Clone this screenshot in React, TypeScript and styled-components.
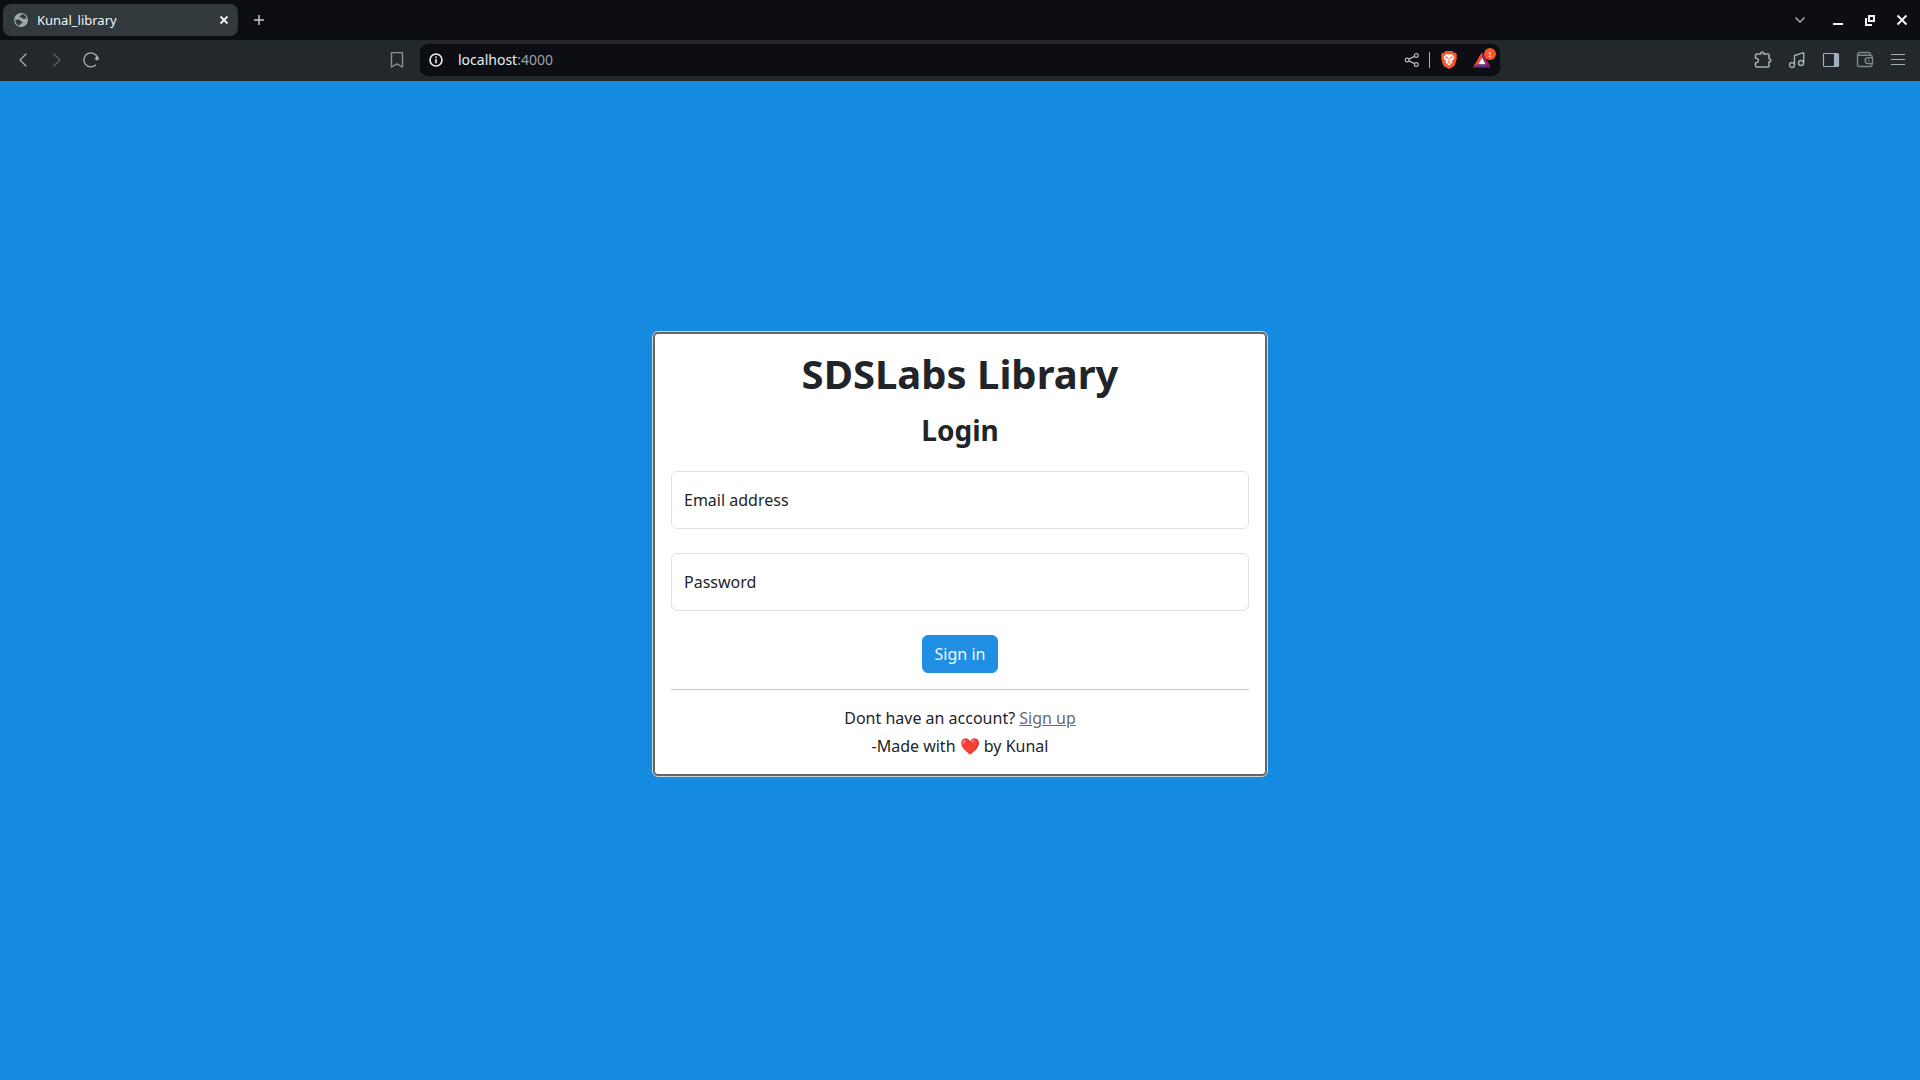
import React from "react";
import styled, { createGlobalStyle } from "styled-components";

const Global = createGlobalStyle`
  *, *::before, *::after { box-sizing: border-box; }
  body {
    margin: 0;
    font-family: "Noto Sans", "Liberation Sans", sans-serif;
    font-size: 16px;
    line-height: 24px;
    color: #212529;
    background: #148ae1;
  }
`;

const Page = styled.div`
  min-height: 100vh;
  display: flex;
  flex-direction: column;
`;

const TabStrip = styled.header`
  height: 40px;
  padding-left: 3px;
  display: flex;
  align-items: center;
  background: #0d0e13;
`;

const Tab = styled.div`
  width: 235px;
  height: 32px;
  padding: 0 8px 0 11px;
  display: flex;
  align-items: center;
  gap: 9px;
  border-radius: 8px;
  background: #31393d;
  color: #f2f4f5;
  font-size: 13px;
`;

const TabTitle = styled.span`
  flex: 1;
`;

const Spacer = styled.div`
  flex: 1;
`;

const IconButton = styled.button<{ $w?: number; $color?: string }>`
  width: ${(p) => p.$w ?? 34}px;
  height: 24px;
  padding: 0;
  border: 0;
  display: flex;
  align-items: center;
  justify-content: center;
  flex: none;
  background: none;
  color: ${(p) => p.$color ?? "#9fb0b8"};
`;

const Toolbar = styled.nav`
  height: 41px;
  padding: 0 6px 1px;
  display: grid;
  grid-template-columns: 1fr minmax(0, 1080px) 1fr;
  align-items: center;
  background: #22282b;
`;

const ToolGroup = styled.div<{ $end?: boolean }>`
  display: flex;
  padding-right: ${(p) => (p.$end ? 0 : 11)}px;
  justify-content: ${(p) => (p.$end ? "flex-end" : "flex-start")};
`;

const AddressBar = styled.div`
  height: 32px;
  padding-left: 4px;
  display: flex;
  align-items: center;
  border-radius: 8px;
  background: #0d0e13;
`;

const Address = styled.a`
  margin-left: 10px;
  color: #e6edf3;
  font-size: 14px;
  text-decoration: none;
`;

const Port = styled.span`
  color: #9ba4ab;
`;

const Divider = styled.span`
  width: 1px;
  height: 16px;
  background: #a9adb0;
`;

const Main = styled.main`
  flex: 1;
  display: flex;
  align-items: center;
  justify-content: center;
  padding: 0 16px 53px;
`;

const Card = styled.form`
  width: 100%;
  max-width: 614px;
  padding: 16px 16px 14px;
  border: 2px solid #666666;
  border-radius: 5px;
  outline: 1px solid #cfd4d8;
  display: flex;
  flex-direction: column;
  align-items: center;
  background: #ffffff;
`;

const Title = styled.h1`
  margin: 0 0 16px;
  font-size: 40px;
  line-height: 48px;
  font-weight: 700;
`;

const Subtitle = styled.h2`
  margin: 0 0 24px;
  font-size: 28px;
  line-height: 33px;
  font-weight: 700;
`;

const Field = styled.div`
  width: 100%;
  height: 58px;
  margin-bottom: 24px;
  display: grid;
  align-items: center;
`;

const FieldLabel = styled.label`
  grid-area: 1 / 1;
  padding-left: 13px;
  pointer-events: none;
`;

const FieldInput = styled.input`
  grid-area: 1 / 1;
  width: 100%;
  height: 100%;
  padding: 16px 12px;
  border: 1px solid #dee2e6;
  border-radius: 6px;
  background: #ffffff;
  font: inherit;
`;

const SubmitButton = styled.button`
  height: 38px;
  padding: 0 12px;
  border: 1px solid #208fe3;
  border-radius: 6px;
  background: #208fe3;
  color: #f1f8fd;
  font: inherit;
`;

const Rule = styled.hr`
  width: 100%;
  margin: 16px 0 14px;
  border: 0;
  border-top: 1px solid #c7c8c9;
`;

const Line = styled.p`
  margin: 0;
  line-height: 28px;
`;

const SignUp = styled.a`
  color: #666b70;
  text-decoration: underline;
`;

const Svg = ({ size = 18, children, sw = 1.2 }: { size?: number; sw?: number; children: React.ReactNode }) => (
  <svg width={size} height={size} viewBox={`0 0 ${size} ${size}`} fill="none" stroke="currentColor" strokeWidth={sw} strokeLinejoin="round" aria-hidden="true">
    {children}
  </svg>
);

const BrowserTabs = () => (
  <TabStrip>
    <Tab>
      <Svg size={14}>
        <circle cx="7" cy="7" r="7" fill="#a0a7b0" stroke="none" />
        <path d="M9 1.2C7.500 1 6.500 1.800 6.600 2.800c-.8.400-1.200 1.200-.6 1.800h2c.4 1.400 1.600 1.600 2.400 1.200l2.300-.2A6 6 0 0 0 9 1.200ZM1.300 6.800h3.600c1.300 0 2.100.8 2.100 1.900h1.600v1.500H6.800c-.2 1-.8 1.500-1.500 1.700v.9C2.800 12.100 1.100 9.600 1.300 6.800Z" fill="#31393d" stroke="none" />
      </Svg>
      <TabTitle>Kunal_library</TabTitle>
      <IconButton $w={12} $color="#f0f2f3" aria-label="Close tab">
        <Svg size={10} sw={1.8}><path d="M1.500 1.500l7 7M8.500 1.500l-7 7" /></Svg>
      </IconButton>
    </Tab>
    <IconButton $w={42} $color="#c3c7ca" aria-label="New tab">
      <Svg size={12} sw={1.5}><path d="M6 1v10M1 6h10" /></Svg>
    </IconButton>
    <Spacer />
    <IconButton $w={38} aria-label="Search tabs">
      <Svg size={12} sw={1.5}><path d="M1.500 3.500L6 8l4.500-4.500" /></Svg>
    </IconButton>
    <IconButton $w={37} $color="#f0f2f3" aria-label="Minimize">
      <Svg size={12} sw={2}><path d="M1 10h10" /></Svg>
    </IconButton>
    <IconButton $w={28} $color="#f0f2f3" aria-label="Restore">
      <Svg size={12} sw={2}><path d="M5 2h5v5H5zM2 4v7h6" strokeLinejoin="miter" /></Svg>
    </IconButton>
    <IconButton $w={36} $color="#f0f2f3" aria-label="Close window">
      <Svg size={12} sw={2}><path d="M1.500 1.500l9 9M10.500 1.500l-9 9" /></Svg>
    </IconButton>
  </TabStrip>
);

const BrowserToolbar = () => (
  <Toolbar>
    <ToolGroup>
      <IconButton aria-label="Back"><Svg size={16} sw={1.4}><path d="M11.500 1.500L5 8l6.500 6.500" /></Svg></IconButton>
      <IconButton $color="#576166" aria-label="Forward"><Svg size={16} sw={1.4}><path d="M4.500 1.500L11 8l-6.500 6.500" /></Svg></IconButton>
      <IconButton aria-label="Reload">
        <Svg size={16} sw={1.4}>
          <path d="M12.900 12.800A7 7 0 1 1 14.500 5.500" />
          <circle cx="14" cy="6.500" r="1.900" fill="currentColor" stroke="none" />
        </Svg>
      </IconButton>
      <Spacer />
      <IconButton $w={24} $color="#87949a" aria-label="Bookmark this page">
        <Svg size={16} sw={1.4}><path d="M2.500 1.500q0-1 1-1h9q1 0 1 1v13.500L8 11.800 2.500 15z" /></Svg>
      </IconButton>
    </ToolGroup>
    <AddressBar>
      <IconButton $w={24} $color="#eceeef" aria-label="Site information">
        <Svg size={14} sw={1.6}><circle cx="7" cy="7" r="6" /><path d="M7 6v4.200M7 3.600v1.500" /></Svg>
      </IconButton>
      <Address href="#">localhost<Port>:4000</Port></Address>
      <Spacer />
      <IconButton $color="#b4b8ba" aria-label="Share">
        <Svg size={16}><circle cx="3.200" cy="8" r="1.900" /><circle cx="12.300" cy="3.500" r="1.900" /><circle cx="12.300" cy="12.500" r="1.900" /><path d="M5 7.100l5.500-2.700M5 8.900l5.500 2.700" /></Svg>
      </IconButton>
      <Divider />
      <IconButton $w={38} aria-label="Brave Shields">
        <Svg size={18}>
          <path d="M5.500 0h7l1.600 1.800 1.500-.1 1.400 2-.6 1.800.5 1.500-1.900 6.700-1.200 1.700L9 18l-4.800-2.600L3 13.700 1.100 7l.5-1.500L1 3.700l1.400-2 1.500.1z" fill="#fb542b" stroke="none" />
          <path d="M9 3.500l2.500-.6 2.800 2.600-.3 1.800-2 2.700.3 1.800L9 14.800l-3.300-3 .3-1.800-2-2.700-.3-1.800 2.800-2.600z" fill="#ffffff" stroke="none" />
          <path d="M5.300 5.700l2.300.7-.6 1.200zM12.700 5.700l-2.300.7.6 1.200zM9 7v3.300M7.400 10.400L9 11.200l1.600-.8M7.300 12.600l1.700-1 1.700 1" stroke="#fb542b" strokeWidth=".8" />
        </Svg>
      </IconButton>
      <IconButton $w={32} aria-label="Brave Rewards">
        <svg width="24" height="24" viewBox="0 0 24 24" aria-hidden="true">
          <path d="M10 4L1 19.500l5.500-3.200L10 9.500z" fill="#ff4724" />
          <path d="M10 4l9 15.500-5.500-3.200L10 9.500z" fill="#9e1f63" />
          <path d="M1 19.500h18l-5.500-3.200h-7z" fill="#662d91" />
          <path d="M10 9.500l-3.600 6.800h7.200z" fill="#ffffff" />
          <circle cx="18" cy="6" r="6" fill="#fb542b" />
          <text x="18" y="9" textAnchor="middle" fontSize="8" fill="#ffd9cf">1</text>
        </svg>
      </IconButton>
    </AddressBar>
    <ToolGroup $end>
      <IconButton aria-label="Extensions">
        <Svg size={18} sw={1.5}>
          <path d="M2.500 3H7q-.2-2 1.300-2T9.700 3H14q1 0 1 1v4q1.800-.2 1.800 1.400T15 10.800V15q0 1-1 1H2.500q-1 0-1-1v-3.200c2 .2 2.900-.8 2.900-2.300S3.500 7 1.500 7.200V4q0-1 1-1z" />
        </Svg>
      </IconButton>
      <IconButton aria-label="Media controls">
        <Svg size={18} sw={1.4}><circle cx="4" cy="14" r="2.500" /><circle cx="13" cy="12" r="2.500" /><path d="M6.500 14V4.500l9.200-2.800V12" /></Svg>
      </IconButton>
      <IconButton aria-label="Sidebar">
        <Svg size={18}><rect x="1.500" y="2.500" width="15" height="13" rx="1" /><path d="M12 3h4.500v12.500H12z" fill="currentColor" stroke="none" /></Svg>
      </IconButton>
      <IconButton $color="#7b888e" aria-label="Wallet">
        <Svg size={18} sw={1.4}><path d="M16 6.500V5.200q0-1-1-1H3a1.400 1.400 0 0 1 0-2.700h10q1.300 0 1.300 1.300v1.400M1.500 3v11q0 1.500 1.500 1.500h11.500q1.500 0 1.500-1.500v-1.500M16.500 6.800H12a2.800 2.800 0 0 0 0 5.700h4.500zM12 9.600h1.500" /></Svg>
      </IconButton>
      <IconButton $w={32} aria-label="Menu">
        <Svg size={16}><path d="M1 2.500h14M1 7.500h14M1 12.500h14" /></Svg>
      </IconButton>
    </ToolGroup>
  </Toolbar>
);

export default function App() {
  return (
    <Page>
      <Global />
      <BrowserTabs />
      <BrowserToolbar />
      <Main>
        <Card>
          <Title>SDSLabs Library</Title>
          <Subtitle>Login</Subtitle>
          <Field>
            <FieldInput id="email" type="email" />
            <FieldLabel htmlFor="email">Email address</FieldLabel>
          </Field>
          <Field>
            <FieldInput id="password" type="password" />
            <FieldLabel htmlFor="password">Password</FieldLabel>
          </Field>
          <SubmitButton type="button">Sign in</SubmitButton>
          <Rule />
          <Line>Dont have an account? <SignUp href="#">Sign up</SignUp></Line>
          <Line>-Made with ❤️ by Kunal</Line>
        </Card>
      </Main>
    </Page>
  );
}
